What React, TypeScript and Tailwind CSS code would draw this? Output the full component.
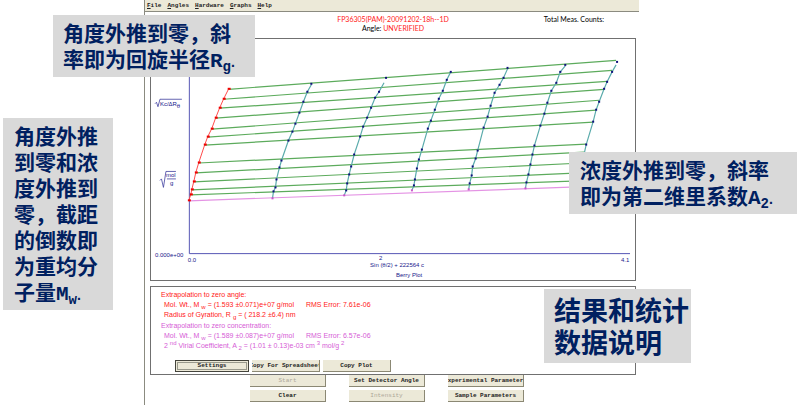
import type { ReactNode } from 'react';
import clsx from 'clsx';

type Point = [number, number];

const menus = ['File', 'Angles', 'Hardware', 'Graphs', 'Help'];

// zero-concentration points, from the highest angle down to the intercept
const zeroConc: Point[] = [
  [228, 89], [223, 99], [219, 108], [215, 118], [211, 129], [207, 137], [204, 145],
  [198, 163], [195, 173], [193, 182], [191, 190], [190, 195], [188, 201],
];

const series: Point[][] = [
  [[311, 84], [307, 92], [303, 102], [299, 113], [295, 124], [292, 132], [288, 141], [281, 161], [279, 168], [276, 180], [275, 188], [273, 192], [272, 199]],
  [[386, 78], [379, 92], [375, 98], [371, 108], [367, 118], [363, 127], [360, 137], [354, 155], [351, 167], [349, 175], [347, 184], [346, 191], [344, 196]],
  [[451, 72], [447, 80], [443, 91], [439, 99], [435, 110], [431, 121], [428, 129], [422, 150], [419, 160], [417, 169], [415, 180], [414, 186], [412, 191]],
  [[508, 68], [504, 78], [500, 85], [495, 93], [491, 106], [488, 117], [484, 128], [478, 151], [476, 159], [473, 167], [472, 176], [470, 184], [469, 190]],
  [[566, 65], [561, 72], [557, 83], [552, 91], [548, 103], [545, 114], [541, 126], [535, 146], [533, 155], [531, 165], [529, 175], [527, 183], [526, 189]],
  [[618, 62], [613, 72], [608, 82], [605, 89], [600, 102], [597, 110], [594, 122], [587, 145], [585, 154], [583, 164], [581, 174], [580, 181], [578, 187]],
];

// top of each concentration fit, can miss the measured point
const fitTops: Point[] = [[311, 85], [384, 83], [451, 72], [508, 69], [566, 66], [617, 65]];

// where each fitted angle line stops on the right
const lineEnds: Point[] = [
  [617, 60], [613, 70], [608, 81], [605, 89], [600, 100], [597, 110], [594, 122],
  [587, 144], [585, 152], [583, 163], [581, 173], [580, 181], [578, 187],
];

const toPoints = (points: Point[]) => points.map(([x, y]) => `${x},${y}`).join(' ');

function BerryPlot() {
  return (
    <svg
      viewBox="150 39 486 242"
      className="block w-full font-['Liberation_Sans',sans-serif] text-[6px]"
      role="img"
      aria-label="Berry Plot"
    >
      {lineEnds.map(([x, y], i) => (
        <line
          key={i}
          x1={zeroConc[i][0]}
          y1={zeroConc[i][1] + 0.5}
          x2={x}
          y2={y + 0.5}
          stroke={i === 12 ? '#e493e4' : '#5cab5c'}
          strokeWidth="1.2"
        />
      ))}
      {series.map((points, i) => (
        <g key={i}>
          <polyline
            points={toPoints([fitTops[i], ...points.slice(1)])}
            fill="none"
            stroke="#5aabab"
            strokeWidth="1.2"
          />
          {points.map(([x, y], j) => (
            <rect key={j} x={x - 1} y={y - 1} width="2" height="2" fill={j === 12 ? '#cc55cc' : '#10107c'} />
          ))}
        </g>
      ))}
      <path d="M188.5 40V254.5H631" fill="none" stroke="#5656b4" strokeWidth="1" />
      <polyline points={toPoints(zeroConc)} fill="none" stroke="#ff4a4a" strokeWidth="1" />
      {zeroConc.map(([x, y], i) => (
        <rect key={i} x={x - 1} y={y - 1} width="3" height="2" fill="#f00000" />
      ))}

      <g fill="#20208c">
        <text x="159" y="106">
          Kc/ΔR<tspan dy="2">θ</tspan>
        </text>
        <text x="165" y="178">mol</text>
        <text x="169" y="186">g</text>
        <text x="154" y="258">0.000e+00</text>
        <text x="187" y="263">0.0</text>
        <text x="379" y="261">2</text>
        <text x="370" y="268">Sin (θ/2) + 222564 c</text>
        <text x="396" y="278">Berry Plot</text>
        <text x="622" y="263">4.1</text>
      </g>
      <path
        d="M154 104L155.500 102.500L157 107L159 99.500H181M159 181L160.500 179.500L162.500 188L165 172H175M166 179.500H175"
        fill="none"
        stroke="#3f3f9f"
        strokeWidth="0.8"
      />
    </svg>
  );
}

function Sub({ children }: { children: ReactNode }) {
  return <sub className="text-[6px]">{children}</sub>;
}

function Sup({ children }: { children: ReactNode }) {
  return <sup className="text-[6px]">{children}</sup>;
}

interface WinButtonProps {
  label: string;
  className?: string;
  disabled?: boolean;
  focused?: boolean;
}

function WinButton({ label, className, disabled, focused }: WinButtonProps) {
  return (
    <button
      type="button"
      disabled={disabled}
      className={clsx(
        "flex h-3 items-center justify-center overflow-hidden whitespace-nowrap border-r border-b border-[#8b8874] bg-[#ece9d8] font-['Liberation_Mono',monospace] text-[6px] leading-none",
        disabled ? 'text-[#aca899]' : 'font-bold text-[#222222]',
        focused && 'border-t border-l border-[#44443c] outline outline-1 -outline-offset-3 outline-[#99998c]',
        className,
      )}
    >
      {label}
    </button>
  );
}

function Callout({ className, children }: { className?: string; children: ReactNode }) {
  return (
    <div
      className={clsx(
        "bg-[#d9d9d9] font-['Noto_Sans_CJK_SC',sans-serif] font-bold text-[#002060]",
        className,
      )}
    >
      {children}
    </div>
  );
}

// latin symbol with its subscript, closing the sentence
function Quantity({ symbol, index }: { symbol: string; index: string }) {
  return (
    <span className="font-['Liberation_Mono',monospace] leading-none">
      {symbol}
      <sub className="text-[14px]">{index}</sub>
      <span className="font-['Liberation_Sans',sans-serif] text-[14px]">.</span>
    </span>
  );
}

export default function App() {
  return (
    <div className="relative flex min-h-screen overflow-hidden bg-white">
      <aside className="w-36 shrink-0 pt-[118px] pl-[3px]">
        <Callout className="w-[110px] pt-1 pr-3 pb-[5px] pl-[11px] text-[21px] leading-[26px]">
          角度外推到零和浓度外推到零，截距的倒数即为重均分子量
          <Quantity symbol="M" index="w" />
        </Callout>
      </aside>

      <main className="mr-[158px] min-w-0 flex-1 border-l border-[#8b8b80] font-['Liberation_Sans',sans-serif] text-[7px]">
        <nav className="flex h-3 items-center gap-[6px] border-b border-[#8b8b80] bg-[#ece9d8] pl-[2px] font-['Liberation_Mono',monospace] text-[6px] leading-none font-bold text-[#222222]">
          {menus.map((menu) => (
            <button key={menu} type="button" className="first-letter:underline">
              {menu}
            </button>
          ))}
        </nav>

        <div className="pr-[3px] pl-[5px]">
          <header className="grid h-[26px] grid-cols-[1fr_auto_1fr] pt-[3px] font-[Lato,'Liberation_Sans',sans-serif] leading-[9px]">
            <div className="col-start-2 text-center">
              <h1 className="text-[#ff2020]">FP36305(PAM)-20091202-18h--1D</h1>
              <p>
                Angle: <span className="text-[#ff2020]">UNVERIFIED</span>
              </p>
            </div>
            <p className="pr-8 text-right">Total Meas. Counts:</p>
          </header>

          <section className="border border-[#707070]">
            <BerryPlot />
          </section>

          <section className="mt-[5px] border border-[#707070] pt-[3px] pl-[10px] leading-[10px]">
            <div className="text-[#ff2020]">
              <h2>Extrapolation to zero angle:</h2>
              <p className="pl-[3px]">
                Mol. Wt., M <Sub>w</Sub> = (1.593 ±0.071)e+07 g/mol
                <span className="ml-3">RMS Error: 7.61e-06</span>
              </p>
              <p className="pl-[3px]">
                Radius of Gyration, R <Sub>g</Sub> = ( 218.2 ±6.4) nm
              </p>
            </div>
            <div className="mt-px text-[#d65cd6]">
              <h2>Extrapolation to zero concentration:</h2>
              <p className="pl-[3px]">
                Mol. Wt., M <Sub>w</Sub> = (1.589 ±0.087)e+07 g/mol
                <span className="ml-3">RMS Error: 6.57e-06</span>
              </p>
              <p className="pl-[3px]">
                2 <Sup>nd</Sup> Virial Coefficient, A <Sub>2</Sub> = (1.01 ± 0.13)e-03 cm <Sup>3</Sup> mol/g <Sup>2</Sup>
              </p>
            </div>
            <div className="mt-[9px] mb-[2px] ml-[14px] flex gap-[3px]">
              <WinButton label="Settings" focused className="w-[74px]" />
              <WinButton label="Copy For Spreadsheet" className="w-[68px]" />
              <WinButton label="Copy Plot" className="w-[68px]" />
            </div>
          </section>
        </div>

        <div className="ml-[105px] grid w-fit grid-cols-[repeat(3,76px)] gap-x-[23px] gap-y-[3px]">
          <WinButton label="Start" disabled />
          <WinButton label="Set Detector Angle" />
          <WinButton label="Experimental Parameters" />
          <WinButton label="Clear" />
          <WinButton label="Intensity" disabled />
          <WinButton label="Sample Parameters" />
        </div>
      </main>

      <Callout className="absolute top-[15px] left-[53px] w-[202px] pt-1 pb-[5px] pl-[10px] text-[21px] leading-[26px]">
        角度外推到零，斜
        <br />
        率即为回旋半径
        <Quantity symbol="R" index="g" />
      </Callout>
      <Callout className="absolute top-[152px] right-0 w-[228px] pt-1 pb-[5px] pl-[11px] text-[21px] leading-[26px]">
        浓度外推到零，斜率
        <br />
        即为第二维里系数
        <Quantity symbol="A" index="2" />
      </Callout>
      <Callout className="absolute top-[289px] right-[106px] w-[147px] py-[5px] pl-[10px] text-[27px] leading-8">
        结果和统计
        <br />
        数据说明
      </Callout>
    </div>
  );
}
